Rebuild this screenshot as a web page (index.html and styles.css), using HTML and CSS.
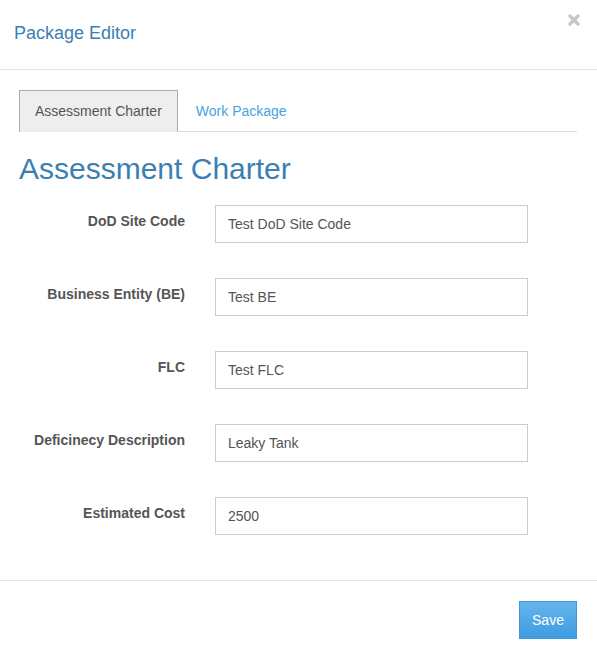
FILE: index.html
```html
<!DOCTYPE html>
<html>
<head>
<meta charset="utf-8">
<link rel="stylesheet" href="styles.css">
</head>
<body>
<div class="modal">
  <div class="modal-header">
    <h4 class="modal-title">Package Editor</h4>
    <button class="close" aria-label="Close">
      <svg width="12" height="12" viewBox="0 0 12 12"><path d="M2 2L10 10M10 2L2 10" stroke="#c6c6c6" stroke-width="3.2" stroke-linecap="round"/></svg>
    </button>
  </div>
  <div class="modal-body">
    <ul class="nav-tabs">
      <li class="tab active"><a>Assessment Charter</a></li>
      <li class="tab"><a>Work Package</a></li>
    </ul>
    <h2 class="section-title">Assessment Charter</h2>
    <form class="form">
      <label class="control-label">DoD Site Code</label>
      <input class="form-control" type="text" value="Test DoD Site Code">
      <label class="control-label">Business Entity (BE)</label>
      <input class="form-control" type="text" value="Test BE">
      <label class="control-label">FLC</label>
      <input class="form-control" type="text" value="Test FLC">
      <label class="control-label">Deficinecy Description</label>
      <input class="form-control" type="text" value="Leaky Tank">
      <label class="control-label">Estimated Cost</label>
      <input class="form-control" type="text" value="2500">
    </form>
  </div>
  <div class="modal-footer">
    <button class="btn-save">Save</button>
  </div>
</div>
</body>
</html>
```

FILE: styles.css
```css
* { box-sizing: border-box; }
html, body {
  margin: 0;
  padding: 0;
  background: #fff;
  font-family: "Liberation Sans", Arial, sans-serif;
  font-size: 14px;
  color: #333;
}
.modal {
  width: 597px;
  height: 658px;
  display: flex;
  flex-direction: column;
}
.modal-header {
  height: 70px;
  padding: 23px 17px 0 14px;
  border-bottom: 1px solid #e5e5e5;
  display: flex;
  justify-content: space-between;
  align-items: flex-start;
}
.modal-title {
  margin: 0;
  font-size: 18px;
  font-weight: normal;
  line-height: 21px;
  color: #3b7fb3;
}
.close {
  border: 0;
  background: none;
  padding: 0;
  margin-top: -9px;
  width: 12px;
  height: 12px;
  display: flex;
}
.modal-body {
  padding: 20px 20px 0 19px;
  height: 510px;
}
.nav-tabs {
  list-style: none;
  margin: 0;
  padding: 0;
  display: flex;
  border-bottom: 1px solid #ddd;
}
.tab {
  margin-right: 2px;
  margin-bottom: -1px;
}
.tab a {
  display: block;
  padding: 10px 15px;
  line-height: 20px;
  border: 1px solid transparent;
  color: #47a3e0;
}
.tab.active a {
  background: #eee;
  border-color: #aaa #aaa transparent;
  color: #555;
}
.section-title {
  margin: 20px 0 20px;
  font-size: 30px;
  font-weight: normal;
  line-height: 33px;
  color: #3b7fb3;
}
.form {
  display: grid;
  grid-template-columns: 166px 313px;
  column-gap: 30px;
  row-gap: 35px;
}
.control-label {
  text-align: right;
  font-weight: bold;
  color: #555;
  padding-top: 6px;
  line-height: 20px;
}
.form-control {
  height: 38px;
  width: 313px;
  padding: 6px 12px;
  border: 1px solid #ccc;
  font-family: "Liberation Sans", Arial, sans-serif;
  font-size: 14px;
  color: #555;
  background: #fff;
  margin: 0;
}
.modal-footer {
  border-top: 1px solid #e5e5e5;
  padding: 20px 20px 0;
  display: flex;
  justify-content: flex-end;
}
.btn-save {
  width: 58px;
  height: 38px;
  border: 1px solid #3f96d9;
  background: linear-gradient(to bottom, #64b5eb, #3e9ce1);
  color: #fff;
  font-family: "Liberation Sans", Arial, sans-serif;
  font-size: 14px;
  padding: 0;
}
```
